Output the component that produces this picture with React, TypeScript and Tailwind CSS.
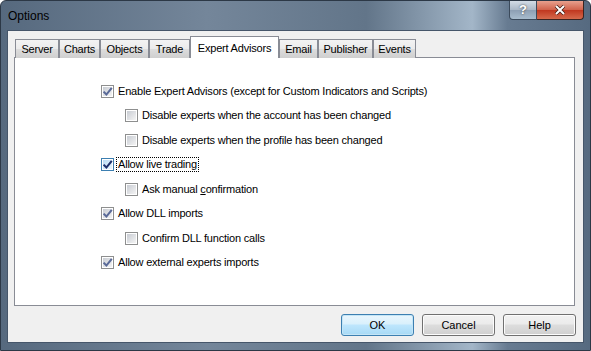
import type { ReactNode } from 'react';

type Tab = { label: string; w: string; active?: boolean };

const tabs: Tab[] = [
  { label: 'Server', w: 'w-[44px]' },
  { label: 'Charts', w: 'w-[41px]' },
  { label: 'Objects', w: 'w-[49px]' },
  { label: 'Trade', w: 'w-[41px]' },
  { label: 'Expert Advisors', w: 'w-[89px]', active: true },
  { label: 'Email', w: 'w-[39px]' },
  { label: 'Publisher', w: 'w-[55px]' },
  { label: 'Events', w: 'w-[43px]' },
];

// Casilla estilo Windows 7
function Casilla({ marcada, hover }: { marcada?: boolean; hover?: boolean }) {
  return (
    <span
      className={
        'flex h-[13px] w-[13px] shrink-0 items-center justify-center border ' +
        (hover ? 'border-[#3c7fb1] bg-white' : 'border-[#8e8f8f] bg-white')
      }
    >
      <span
        className={
          'relative flex h-[9px] w-[9px] items-center justify-center ' +
          (hover
            ? 'bg-[linear-gradient(135deg,#b9dcf5,#e9f5fd)]'
            : 'bg-[linear-gradient(135deg,#c8ccd3,#f4f4f4)]')
        }
      >
        {marcada && (
          <svg viewBox="0 0 9 9" className="absolute -left-[1px] -top-[1px] h-[11px] w-[11px]">
            <path
              d="M1.3 4.6 L3.6 7 L8 1.6"
              fill="none"
              stroke={hover ? '#1d2f6b' : '#5a6a98'}
              strokeWidth="1.7"
              strokeLinejoin="miter"
            />
          </svg>
        )}
      </span>
    </span>
  );
}

function Fila({
  indent,
  marcada,
  hover,
  foco,
  children,
}: {
  indent?: boolean;
  marcada?: boolean;
  hover?: boolean;
  foco?: boolean;
  children: ReactNode;
}) {
  return (
    <div className={'flex h-[24.5px] items-center ' + (indent ? 'pl-[110px]' : 'pl-[86px]')}>
      <Casilla marcada={marcada} hover={hover} />
      <span
        className={
          'ml-[2px] px-[1px] leading-[13px] ' +
          (foco ? 'border border-dotted border-black' : 'border border-transparent')
        }
      >
        {children}
      </span>
    </div>
  );
}

function Boton({ children, defecto }: { children: ReactNode; defecto?: boolean }) {
  return (
    <button
      className={
        'flex h-[22px] w-[73px] items-center justify-center rounded-[3px] border text-[11px] text-black ' +
        (defecto
          ? 'border-[#3c7fb1] bg-[linear-gradient(#eaf6fd_0%,#d9f0fc_45%,#bee6fd_50%,#a7d9f5_100%)] shadow-[inset_0_0_0_1px_#c4e5f6]'
          : 'border-[#707070] bg-[linear-gradient(#f2f2f2_0%,#ebebeb_45%,#dddddd_50%,#cfcfcf_100%)] shadow-[inset_0_0_0_1px_#fcfcfc]')
      }
    >
      {children}
    </button>
  );
}

export default function App() {
  return (
    <div
      className="relative flex h-[351px] w-[591px] flex-col overflow-hidden rounded-t-[6px] border border-[#2c3846] bg-[linear-gradient(90deg,#56697e,#74869a_35%,#627589_62%,#a3b6c8_80%,#677b91_86%,#566a80)] px-[6px] pb-[7px]"
      style={{ fontFamily: '"Liberation Sans", Arial, sans-serif' }}
    >
      {/* Barra de título */}
      <div className="flex h-[29px] shrink-0 items-center pl-[1px] text-[12px] text-black">
        Options
      </div>
      <div className="absolute right-[6px] top-0 flex">
        <div className="flex h-[19px] w-[28px] items-center justify-center rounded-bl-[4px] border border-t-0 border-[#3b4a5b] bg-[linear-gradient(#d3dce6,#a9b7c6_50%,#8d9fb3_51%,#a8bccd)] text-[13px] font-bold text-white [text-shadow:0_0_2px_#333]">
          ?
        </div>
        <div className="flex h-[19px] w-[47px] items-center justify-center rounded-br-[4px] border border-l-0 border-t-0 border-[#3b2420] bg-[linear-gradient(#e8a08e,#d0614a_50%,#c0371f_51%,#d56a4c)]">
          <svg viewBox="0 0 12 10" className="h-[10px] w-[12px]">
            <path d="M2 1 L10 9 M10 1 L2 9" stroke="#3a1a14" strokeWidth="3.4" />
            <path d="M2 1 L10 9 M10 1 L2 9" stroke="#ffffff" strokeWidth="2" />
          </svg>
        </div>
      </div>

      {/* Área cliente */}
      <div className="flex flex-1 flex-col border border-[#46566a] bg-[#f0f0f0] pl-[6px] pt-[5px] text-[11px] tracking-[-0.2px] text-black">
        <div className="relative z-10 -mb-px flex h-[22px] items-end pl-px">
          {tabs.map((t) =>
            t.active ? (
              <div
                key={t.label}
                className={t.w + ' flex h-[22px] items-start justify-center border border-b-0 border-[#898c95] bg-white pt-[3px]'}
              >
                {t.label}
              </div>
            ) : (
              <div
                key={t.label}
                className={
                  t.w +
                  ' flex h-[19px] items-center justify-center border border-b-0 border-[#898c95] bg-[linear-gradient(#f3f3f3,#ebebeb_50%,#dddddd_51%,#cfcfcf)] pt-[1px]'
                }
              >
                {t.label}
              </div>
            ),
          )}
        </div>

        <div className="flex h-[249px] w-[561px] flex-col border border-[#898c95] bg-white pt-[21px]">
          <Fila marcada>Enable Expert Advisors (except for Custom Indicators and Scripts)</Fila>
          <Fila indent>Disable experts when the account has been changed</Fila>
          <Fila indent>Disable experts when the profile has been changed</Fila>
          <Fila marcada hover foco>
            Allow live trading
          </Fila>
          <Fila indent>
            Ask manual <span className="underline">c</span>onfirmation
          </Fila>
          <Fila marcada>Allow DLL imports</Fila>
          <Fila indent>Confirm DLL function calls</Fila>
          <Fila marcada>Allow external experts imports</Fila>
        </div>

        <div className="mt-[8px] flex w-[562px] justify-end gap-[8px] tracking-normal">
          <Boton defecto>OK</Boton>
          <Boton>Cancel</Boton>
          <Boton>Help</Boton>
        </div>
      </div>
    </div>
  );
}
